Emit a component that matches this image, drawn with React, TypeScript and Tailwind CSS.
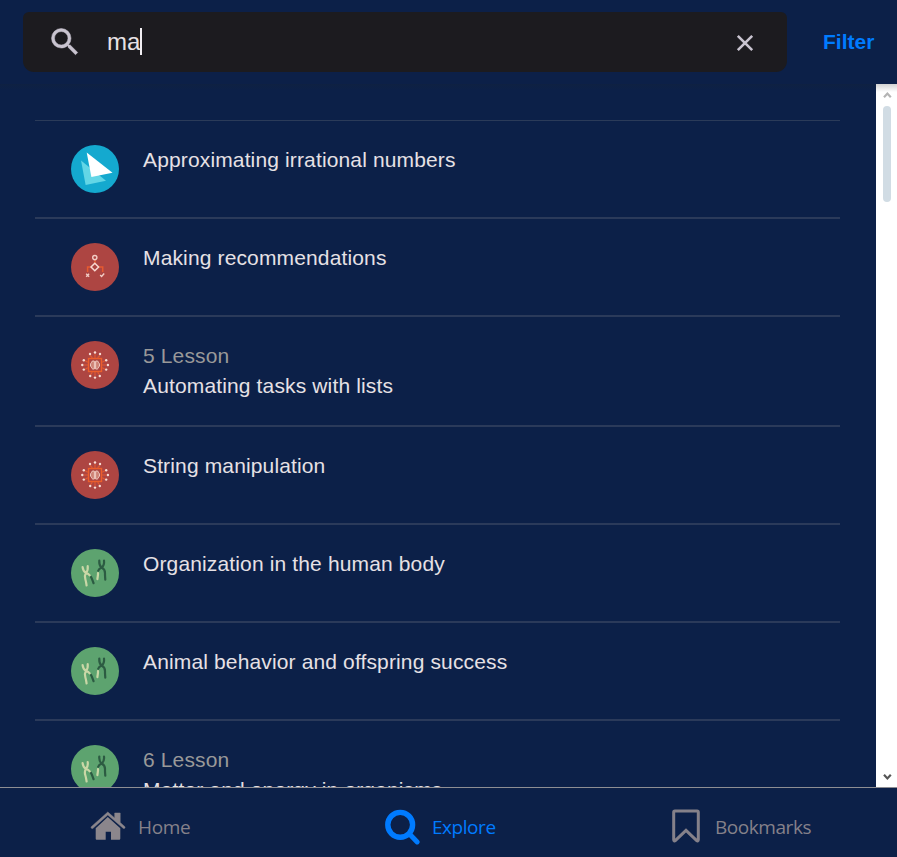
import React from 'react';

type Kind = 'kite' | 'flow' | 'chip' | 'gene';

interface Row {
  kind: Kind;
  title: string;
  lesson?: string;
}

const rows: Row[] = [
  { kind: 'kite', title: 'Approximating irrational numbers' },
  { kind: 'flow', title: 'Making recommendations' },
  { kind: 'chip', title: 'Automating tasks with lists', lesson: '5 Lesson' },
  { kind: 'chip', title: 'String manipulation' },
  { kind: 'gene', title: 'Organization in the human body' },
  { kind: 'gene', title: 'Animal behavior and offspring success' },
  { kind: 'gene', title: 'Matter and energy in organisms', lesson: '6 Lesson' },
];

const pins = [
  [24, 11.5], [19, 13], [29, 13], [12.8, 19.2], [35.2, 19.2], [11.3, 24],
  [36.9, 24], [12.8, 28.6], [35.2, 28.6], [19.2, 35], [28.8, 35], [24, 36.6],
];

function Kite() {
  return (
    <svg viewBox="0 0 48 48" className="size-12 shrink-0">
      <circle cx="24" cy="24" r="24" fill="#14a9cf" />
      <path d="M10 15.5 35 35.8 14.6 40Z" fill="#63d6e6" />
      <path d="M15.7 7.5 41.5 27.7 20.4 32Z" fill="#fff" />
    </svg>
  );
}

function Flow() {
  return (
    <svg viewBox="0 0 48 48" className="size-12 shrink-0" fill="none">
      <circle cx="24" cy="24" r="24" fill="#ad4542" />
      <path d="M24 16.5V20M20.5 24h-3.9v5M27.5 24h4.2v5" stroke="#e65a30" strokeWidth="1.5" />
      <circle cx="23.8" cy="14.6" r="2.1" stroke="#f2cdc5" strokeWidth="1.4" />
      <path d="m23.8 20.2 3.8 3.8-3.8 3.8-3.8-3.8Z" stroke="#f8d9d1" strokeWidth="1.5" />
      <path d="m15.2 30.8 2.9 2.9m0-2.9-2.9 2.9M29.2 32l1.4 1.5 2.6-3" stroke="#f2cdc5" strokeWidth="1.4" />
    </svg>
  );
}

function Chip() {
  return (
    <svg viewBox="0 0 48 48" className="size-12 shrink-0" fill="none">
      <circle cx="24" cy="24" r="24" fill="#ad4542" />
      <path
        d="M24 13v4M19 14.5l2 1.8V18M29 14.5l-2 1.8V18M14 19.5l2 1.5h2M34 19.5 32 21h-2M12.5 24H17M35.5 24H31M14 28.5l2-1.5h2M34 28.5 32 27h-2M24 35v-4M19.5 33.7l1.5-1.8V30M28.5 33.7 27 31.9V30"
        stroke="#e25a30"
        strokeWidth="1.1"
      />
      <rect x="17.5" y="17.5" width="13" height="13" stroke="#ec5e2c" strokeWidth="1.4" />
      <path
        d="M23.4 20.2c-2.2-.8-2.8.5-3 1.4-1.3.9-1.3 3.7 0 4.6.3 1.7 1.6 2.2 3 1.7zM24.6 20.2c2.2-.8 2.8.5 3 1.4 1.3.9 1.3 3.7 0 4.6-.3 1.7-1.6 2.2-3 1.7z"
        fill="#ce8377"
        stroke="#f0cdc4"
        strokeWidth="1"
      />
      {pins.map(([x, y]) => (
        <circle key={`${x}-${y}`} cx={x} cy={y} r="1.2" fill="#f8ddd5" />
      ))}
    </svg>
  );
}

function Gene() {
  return (
    <svg viewBox="0 0 48 48" className="size-12 shrink-0" fill="none" strokeLinecap="round" strokeLinejoin="round" strokeWidth="2.2">
      <circle cx="24" cy="24" r="24" fill="#5da36f" />
      <path d="M19.8 27.6c1.3 1.8 1.7 4 2.8 6.6" stroke="#2c5b42" />
      <path
        d="M11.6 18.2c.3 2.9 1.2 4.5 3.4 5.6 1.5-1.5 2.1-3.6 1.7-6.6M14.8 24c-1.2 2.1-1.2 4.2-.4 6.5.7 2 .8 3.7 1.2 6M15.2 24c1.8.5 2.6 1.2 3.5 2.4"
        stroke="#c9d7a6"
      />
      <path
        d="M28.3 11.6c-.3 3.2.2 5.2 2.3 7.1 2-1.7 2.8-3.9 2.4-7.1M30.5 18.8c-1.8.6-2.9 1.6-3.3 3M31 18.8c2.5 1.4 3.1 3 3 5.4-.1 2.3.1 3.8.3 6.4"
        stroke="#2c5b42"
      />
      <path d="M27 24c.2 2.2-.4 3.8-.6 6.1" stroke="#c9d7a6" />
    </svg>
  );
}

const icons: Record<Kind, () => React.JSX.Element> = { kite: Kite, flow: Flow, chip: Chip, gene: Gene };

function Scrollbar() {
  return (
    <div className="flex w-[21px] shrink-0 flex-col items-center bg-white bg-linear-to-b from-[#d2d2d2] to-white bg-[length:100%_8px] bg-no-repeat">
      <svg viewBox="0 0 21 22" className="h-[22px] w-[21px]" fill="none">
        <path d="m8 13.2 3.4-3.6 3.4 3.6" stroke="#b4b4b4" strokeWidth="2.2" />
      </svg>
      <div className="ml-px h-24 w-2 rounded-full bg-[#d1dce4]" />
      <svg viewBox="0 0 21 22" className="mt-auto h-[22px] w-[21px]" fill="none">
        <path d="m8 9.8 3.4 3.6 3.4-3.6" stroke="#555" strokeWidth="2.2" />
      </svg>
    </div>
  );
}

export default function App() {
  return (
    <div className="flex h-[857px] w-[897px] flex-col overflow-hidden bg-[#0c2048] font-['Liberation_Sans',Arial,sans-serif]">
      <header className="flex h-[84px] shrink-0 pt-3 pl-[23px]">
        <div className="flex h-[60px] w-[764px] items-center rounded-t-[6px] rounded-b-[11px] bg-[#1c1b1f]">
          <svg viewBox="0 0 36 36" className="mb-px ml-6 size-9" fill="#c9c4d0" stroke="#c9c4d0" strokeWidth=".5">
            <path d="M23.25 21h-1.19l-.42-.4A9.7 9.7 0 0 0 24 14.25 9.75 9.75 0 1 0 14.25 24c2.42 0 4.63-.89 6.35-2.36l.4.42v1.19l7.5 7.47 2.24-2.24L23.25 21zm-9 0a6.74 6.74 0 1 1 0-13.5 6.74 6.74 0 0 1 0 13.5z" />
          </svg>
          <span className="ml-6 text-[24px] leading-[30px] text-[#e6e1e5]">ma</span>
          <span className="mb-px h-[27px] w-[2px] bg-[#f1eef2]" />
          <svg viewBox="0 0 18 18" className="mt-[2px] mr-[33px] ml-auto size-[18px]" fill="none">
            <path d="m1.8 1.8 14.4 14.4m0-14.4L1.8 16.2" stroke="#c9c4d0" strokeWidth="2.6" />
          </svg>
        </div>
        <button className="ml-9 h-[60px] text-[21px] font-bold text-[#007bff]">Filter</button>
      </header>

      <main className="flex min-h-0 flex-1">
        <div className="flex-1 overflow-hidden bg-linear-to-b from-[#0f2142] to-[#0c2048] bg-[length:100%_6px] bg-no-repeat pt-9 pr-9 pl-[35px]">
          <div className="h-px bg-[#2b3b59]" />
          {rows.map((row) => {
            const Icon = icons[row.kind];
            return (
              <div key={row.title} className="flex items-start gap-6 border-b-2 border-[#2b3a5a] py-6 pl-9">
                <Icon />
                <div className="text-[21px] leading-[30px] tracking-[0.14px] whitespace-nowrap text-[#e6e1e5]">
                  {row.lesson && <div className="text-[#999]">{row.lesson}</div>}
                  <div>{row.title}</div>
                </div>
              </div>
            );
          })}
        </div>
        <Scrollbar />
      </main>

      <nav className="flex h-[70px] shrink-0 border-t border-[#8e8e93] font-['Open_Sans','Noto_Sans',sans-serif] text-[19px] tracking-[-0.45px] text-[#85818a]">
        <div className="flex w-[293px] items-center pt-[9px] pl-[90px]">
          <svg viewBox="0 0 36 30" className="mb-[2px] h-[30px] w-9" fill="#8b868c">
            <path d="M17.8 1 24.7 7V2h5.5v9.5l4.7 4.2c.7.8-.6 2.5-1.7 1.6L17.8 4 3 17.3c-1.1.9-2.5-.8-1.7-1.6z" stroke="#8b868c" strokeWidth=".5" />
            <path d="m17.8 6 12.5 11.2v10.2c0 .9-.5 1.3-1.3 1.3h-8v-8h-5.3v8H7c-.9 0-1.3-.5-1.3-1.3V17.2z" />
          </svg>
          <span className="ml-3 tracking-[-0.35px]">Home</span>
        </div>
        <div className="flex w-[295px] items-center pt-[9px] pl-[90px]">
          <svg viewBox="0 0 38 38" className="mb-px size-[38px]" fill="none" stroke="#007bff" strokeLinecap="round">
            <circle cx="17.2" cy="16.8" r="12.4" strokeWidth="5.4" />
            <path d="m27 26.5 7.2 7.4" strokeWidth="5" />
          </svg>
          <span className="ml-[11px] text-[#007bff]">Explore</span>
        </div>
        <div className="flex flex-1 items-center pt-[9px] pl-[83px]">
          <svg viewBox="0 0 30 36" className="mb-px h-9 w-[30px]" fill="none" stroke="#85818a">
            <path d="M2.7 3.3c0-.8.4-1.3 1.2-1.3h22.2c.8 0 1.2.5 1.2 1.3v27.5c0 1.2-.8 1.5-1.6.8L15 21.4 4.3 31.6c-.8.7-1.6.4-1.6-.8z" strokeWidth="3" />
          </svg>
          <span className="ml-[14px]">Bookmarks</span>
        </div>
      </nav>
    </div>
  );
}
